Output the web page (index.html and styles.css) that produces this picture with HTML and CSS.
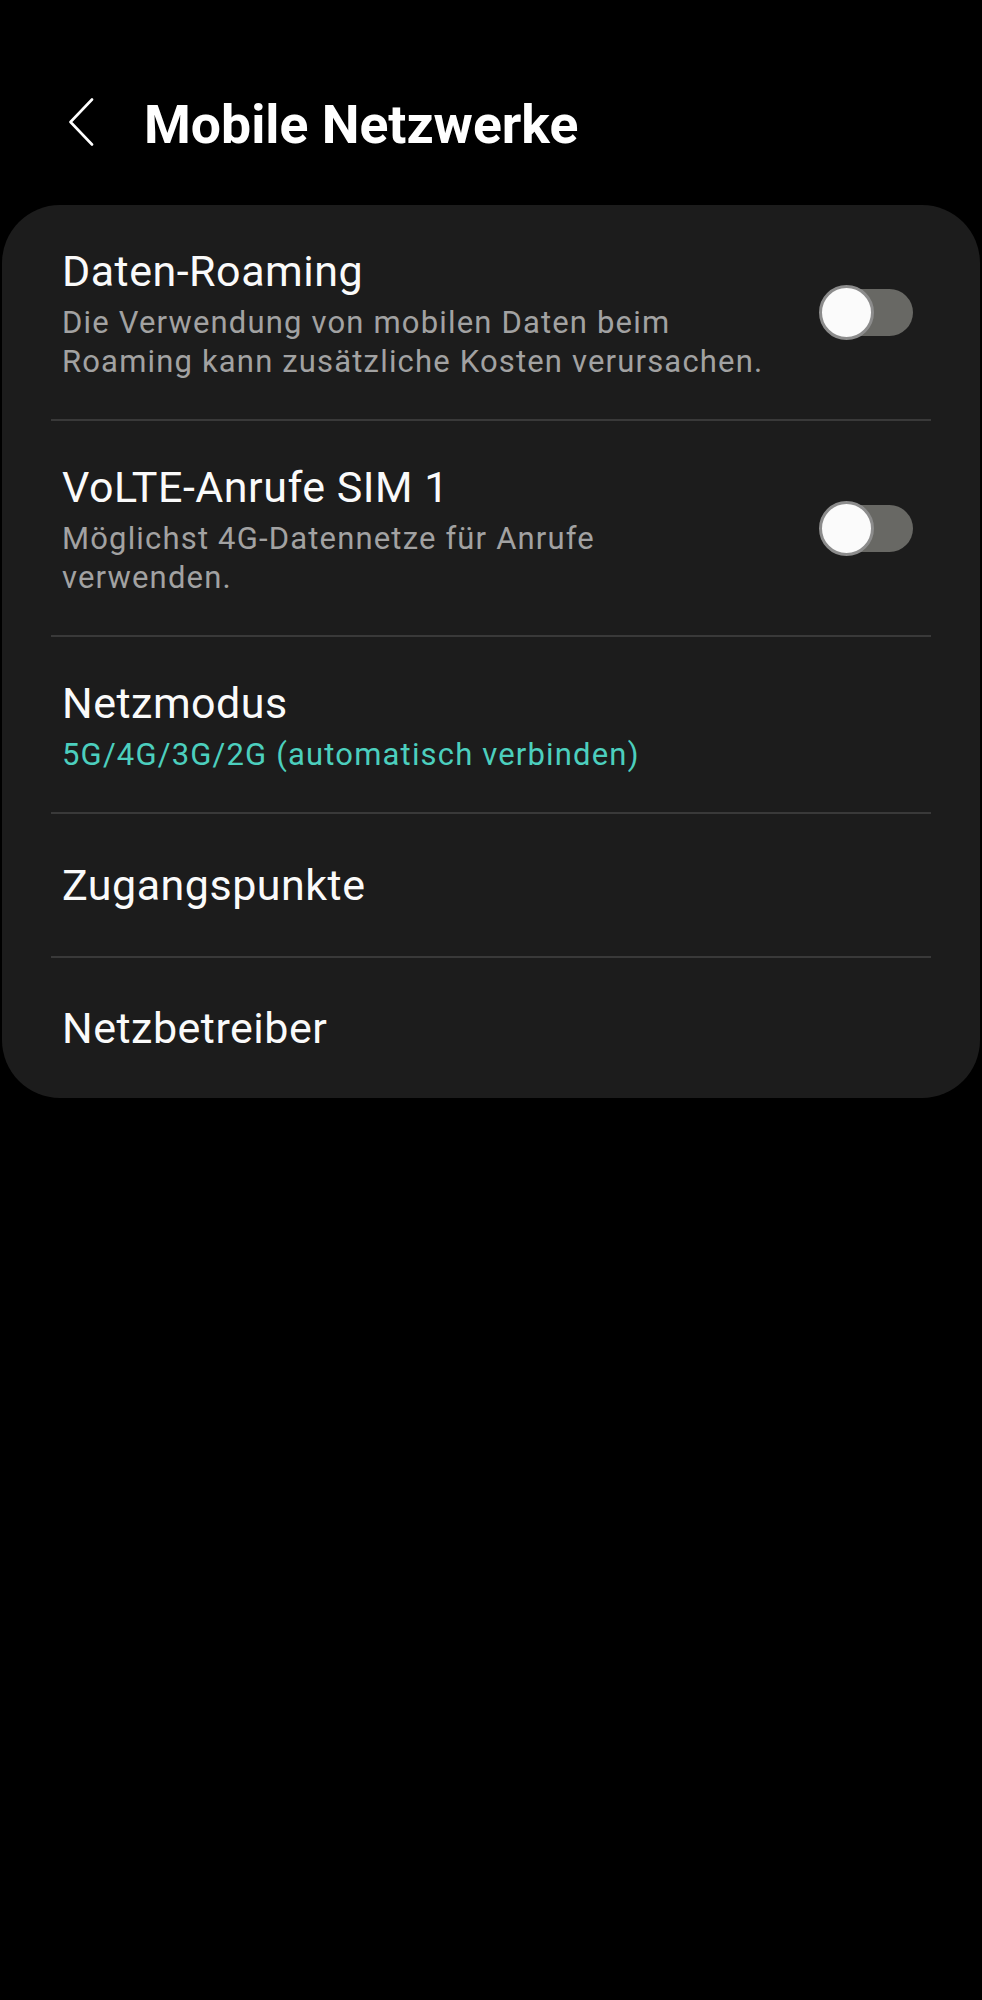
FILE: index.html
```html
<!DOCTYPE html>
<html lang="de">
<head>
  <meta charset="UTF-8">
  <title>Mobile Netzwerke</title>
  <link rel="stylesheet" href="styles.css">
</head>
<body>
  <div class="header">
    <svg class="back" width="26" height="48" viewBox="0 0 26 48">
      <path d="M24 1.5 L2.5 24 L24 46.5" fill="none" stroke="#fff" stroke-width="2.6" stroke-linecap="round" stroke-linejoin="round"/>
    </svg>
    <h1>Mobile Netzwerke</h1>
  </div>

  <div class="card">
    <div class="row">
      <div class="text">
        <div class="title">Daten-Roaming</div>
        <div class="sub">Die Verwendung von mobilen Daten beim Roaming kann zusätzliche Kosten verursachen.</div>
      </div>
      <div class="toggle"><span class="track"></span><span class="thumb"></span></div>
    </div>
    <div class="divider"></div>

    <div class="row">
      <div class="text">
        <div class="title">VoLTE-Anrufe SIM 1</div>
        <div class="sub">Möglichst 4G-Datennetze für Anrufe verwenden.</div>
      </div>
      <div class="toggle"><span class="track"></span><span class="thumb"></span></div>
    </div>
    <div class="divider"></div>

    <div class="row">
      <div class="text">
        <div class="title">Netzmodus</div>
        <div class="sub accent">5G/4G/3G/2G (automatisch verbinden)</div>
      </div>
    </div>
    <div class="divider"></div>

    <div class="row single">
      <div class="text">
        <div class="title">Zugangspunkte</div>
      </div>
    </div>
    <div class="divider"></div>

    <div class="row single last">
      <div class="text">
        <div class="title">Netzbetreiber</div>
      </div>
    </div>
  </div>
</body>
</html>
```

FILE: styles.css
```css
body {
  margin: 0;
  background-color: #000;
  font-family: Roboto, "Noto Sans", sans-serif;
  color: #fafafa;
}
.header {
  display: flex;
  align-items: center;
  padding: 93px 0 0 68px;
  height: 64px;
}
.back {
  margin-bottom: 6px;
}
h1 {
  margin: 0 0 0 50px;
  font-size: 53.5px;
  font-weight: 700;
  line-height: 64px;
  color: #fff;
}
.card {
  margin: 48px 2px 0 2px;
  background-color: #1c1c1c;
  border-radius: 58px;
}
.row {
  display: flex;
  align-items: center;
  padding: 38px 67px 38px 60px;
}
.row.single {
  padding-top: 0;
  padding-bottom: 0;
  min-height: 142px;
}
.row.last {
  min-height: 140px;
}
.text {
  flex: 1;
  max-width: 705px;
}
.title {
  font-size: 43px;
  line-height: 56px;
  letter-spacing: 0.5px;
}
.sub {
  margin-top: 4px;
  font-size: 31px;
  line-height: 39px;
  letter-spacing: 1.17px;
  color: #a2a2a2;
}
.sub.accent {
  color: #4ccfbe;
}
.divider {
  height: 2px;
  margin: 0 49px;
  background-color: #393939;
}
.toggle {
  position: relative;
  width: 94px;
  height: 55px;
  margin-left: auto;
}
.track {
  position: absolute;
  left: 8px;
  right: 0;
  top: 4px;
  height: 47px;
  border-radius: 24px;
  background-color: #686864;
}
.thumb {
  position: absolute;
  left: 0;
  top: 0;
  width: 49px;
  height: 49px;
  border: 3px solid #8c8c8c;
  border-radius: 50%;
  background-color: #fbfbfb;
}
```
